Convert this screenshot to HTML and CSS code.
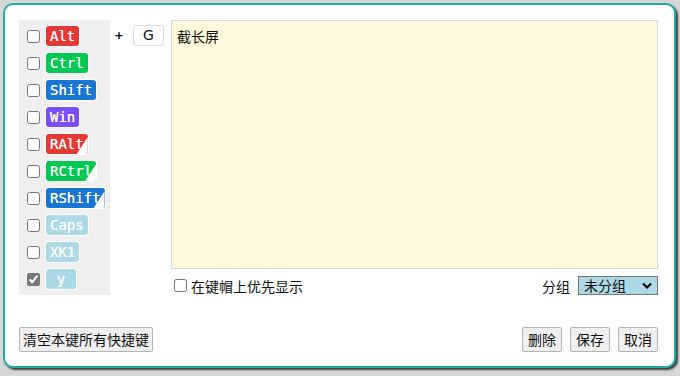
FILE: index.html
```html
<!DOCTYPE html>
<html lang="zh">
<head>
<meta charset="utf-8">
<link rel="stylesheet" href="styles.css">
</head>
<body>
<div class="dialog">
  <div class="top">
    <div class="mods">
      <label class="mod"><input type="checkbox"><span class="key red">Alt</span></label>
      <label class="mod"><input type="checkbox"><span class="key green">Ctrl</span></label>
      <label class="mod"><input type="checkbox"><span class="key blue">Shift</span></label>
      <label class="mod"><input type="checkbox"><span class="key purple">Win</span></label>
      <label class="mod"><input type="checkbox"><span class="key red corner">RAlt</span></label>
      <label class="mod"><input type="checkbox"><span class="key green corner">RCtrl</span></label>
      <label class="mod"><input type="checkbox"><span class="key blue corner">RShift</span></label>
      <label class="mod"><input type="checkbox"><span class="key light">Caps</span></label>
      <label class="mod"><input type="checkbox"><span class="key light">XK1</span></label>
      <label class="mod"><input type="checkbox" class="locked" checked><span class="key light">y</span></label>
    </div>
    <div class="plus">
      <span class="plus-sign">+</span>
      <span class="main-key">G</span>
    </div>
    <div class="main">
      <textarea class="action">截长屏</textarea>
      <div class="opts">
        <label class="prefer"><input type="checkbox"><span>在键帽上优先显示</span></label>
        <div class="group">
          <span>分组</span>
          <div class="select-wrap">
            <select class="group-select"><option>未分组</option></select>
            <svg class="chev" width="10" height="7" viewBox="0 0 10 7"><path d="M1 1.5 L5 5.5 L9 1.5" fill="none" stroke="#000" stroke-width="2"/></svg>
          </div>
        </div>
      </div>
    </div>
  </div>
  <div class="bottom">
    <button class="btn">清空本键所有快捷键</button>
    <div class="btns">
      <button class="btn">删除</button>
      <button class="btn">保存</button>
      <button class="btn">取消</button>
    </div>
  </div>
</div>
</body>
</html>
```

FILE: styles.css
```css
html, body {
  margin: 0;
  padding: 0;
}
body {
  width: 680px;
  height: 376px;
  background: #d6d6d6;
  font-family: "Noto Sans CJK SC", "Noto Sans", sans-serif;
  font-size: 14px;
  color: #111;
  overflow: hidden;
}
.dialog {
  margin: 3px 0 0 3px;
  background: #fff;
  border: 2px solid #1fada6;
  border-radius: 10px;
  box-shadow: 2px 2px 2px rgba(0,0,0,0.7);
  padding: 15px 16px 0 14px;
  box-sizing: border-box;
  width: 673px;
  height: 365px;
  display: flex;
  flex-direction: column;
}
.top {
  display: flex;
  align-items: flex-start;
}
.mods {
  width: 91px;
  background: #efefef;
  padding: 6px 0 6px 8px;
  box-sizing: border-box;
  display: flex;
  flex-direction: column;
  gap: 7px;
}
.mod {
  display: flex;
  align-items: center;
  height: 20px;
  gap: 6px;
}
.mod input {
  margin: 0;
  width: 13px;
  height: 13px;
}
.mod input.locked {
  accent-color: #777;
}
.key {
  position: relative;
  display: inline-block;
  min-width: 30px;
  box-sizing: border-box;
  text-align: center;
  height: 20px;
  line-height: 20px;
  padding: 0 4px;
  border-radius: 3px;
  font-family: "DejaVu Sans Mono", monospace;
  font-size: 14px;
  font-weight: 400;
  color: #fff;
  text-shadow: 0 0 0.4px #fff;
  box-shadow: 0 0 0 1px #fff;
  overflow: hidden;
}
.red { background: #e53935; }
.green { background: #00c853; }
.blue { background: #1976d2; }
.purple { background: #7c4dff; }
.light { background: #add8e6; }
.key.corner::after {
  content: "";
  position: absolute;
  right: 0;
  bottom: 0;
  width: 11px;
  height: 17px;
  background: #fff;
  clip-path: polygon(100% 0, 100% 100%, 0 100%);
}
.plus {
  width: 61px;
  display: flex;
  align-items: center;
  padding-top: 5px;
  box-sizing: border-box;
}
.plus-sign {
  width: 23px;
  padding-left: 5px;
  box-sizing: border-box;
  font-family: "DejaVu Sans Mono", monospace;
  font-size: 13px;
  font-weight: 600;
}
.main-key {
  width: 31px;
  height: 21px;
  box-sizing: border-box;
  border: 1px solid #ddd;
  border-radius: 3px;
  text-align: center;
  line-height: 19px;
  font-family: "DejaVu Sans", sans-serif;
  font-size: 14px;
}
.main {
  flex: 1;
  display: flex;
  flex-direction: column;
}
.action {
  display: block;
  margin: 0;
  width: 100%;
  height: 249px;
  box-sizing: border-box;
  resize: none;
  background: #fff8dc;
  border: 1px solid #d8d8d8;
  padding: 6px 5px;
  font-family: "Noto Sans CJK SC", sans-serif;
  font-size: 14px;
  line-height: 18px;
  color: #111;
}
.opts {
  display: flex;
  justify-content: space-between;
  align-items: center;
  margin-top: 7px;
  height: 19px;
}
.prefer {
  display: flex;
  align-items: center;
  gap: 4px;
  line-height: 18px;
  padding-left: 3px;
}
.prefer input {
  margin: 0;
  width: 13px;
  height: 13px;
}
.group {
  display: flex;
  align-items: center;
  gap: 8px;
  line-height: 18px;
}
.select-wrap {
  position: relative;
  width: 80px;
  height: 19px;
}
.group-select {
  appearance: none;
  -webkit-appearance: none;
  display: block;
  width: 80px;
  height: 19px;
  box-sizing: border-box;
  background: #add8e6;
  border: 1px solid #767676;
  border-radius: 0;
  font-family: "Noto Sans CJK SC", sans-serif;
  font-size: 14px;
  line-height: 17px;
  padding: 0 0 0 5px;
  margin: 0;
  color: #111;
}
.chev {
  position: absolute;
  right: 6px;
  top: 6px;
  pointer-events: none;
}
.bottom {
  display: flex;
  justify-content: space-between;
  margin-top: 32px;
}
.btns {
  display: flex;
  gap: 8px;
}
.btn {
  height: 25px;
  padding: 0 3px;
  background: #efefef;
  border: 1px solid #b4b4b4;
  border-radius: 2px;
  font-family: "Noto Sans CJK SC", sans-serif;
  font-size: 14px;
  line-height: 23px;
  color: #111;
}
.btns .btn {
  padding: 0 5px;
}
```
